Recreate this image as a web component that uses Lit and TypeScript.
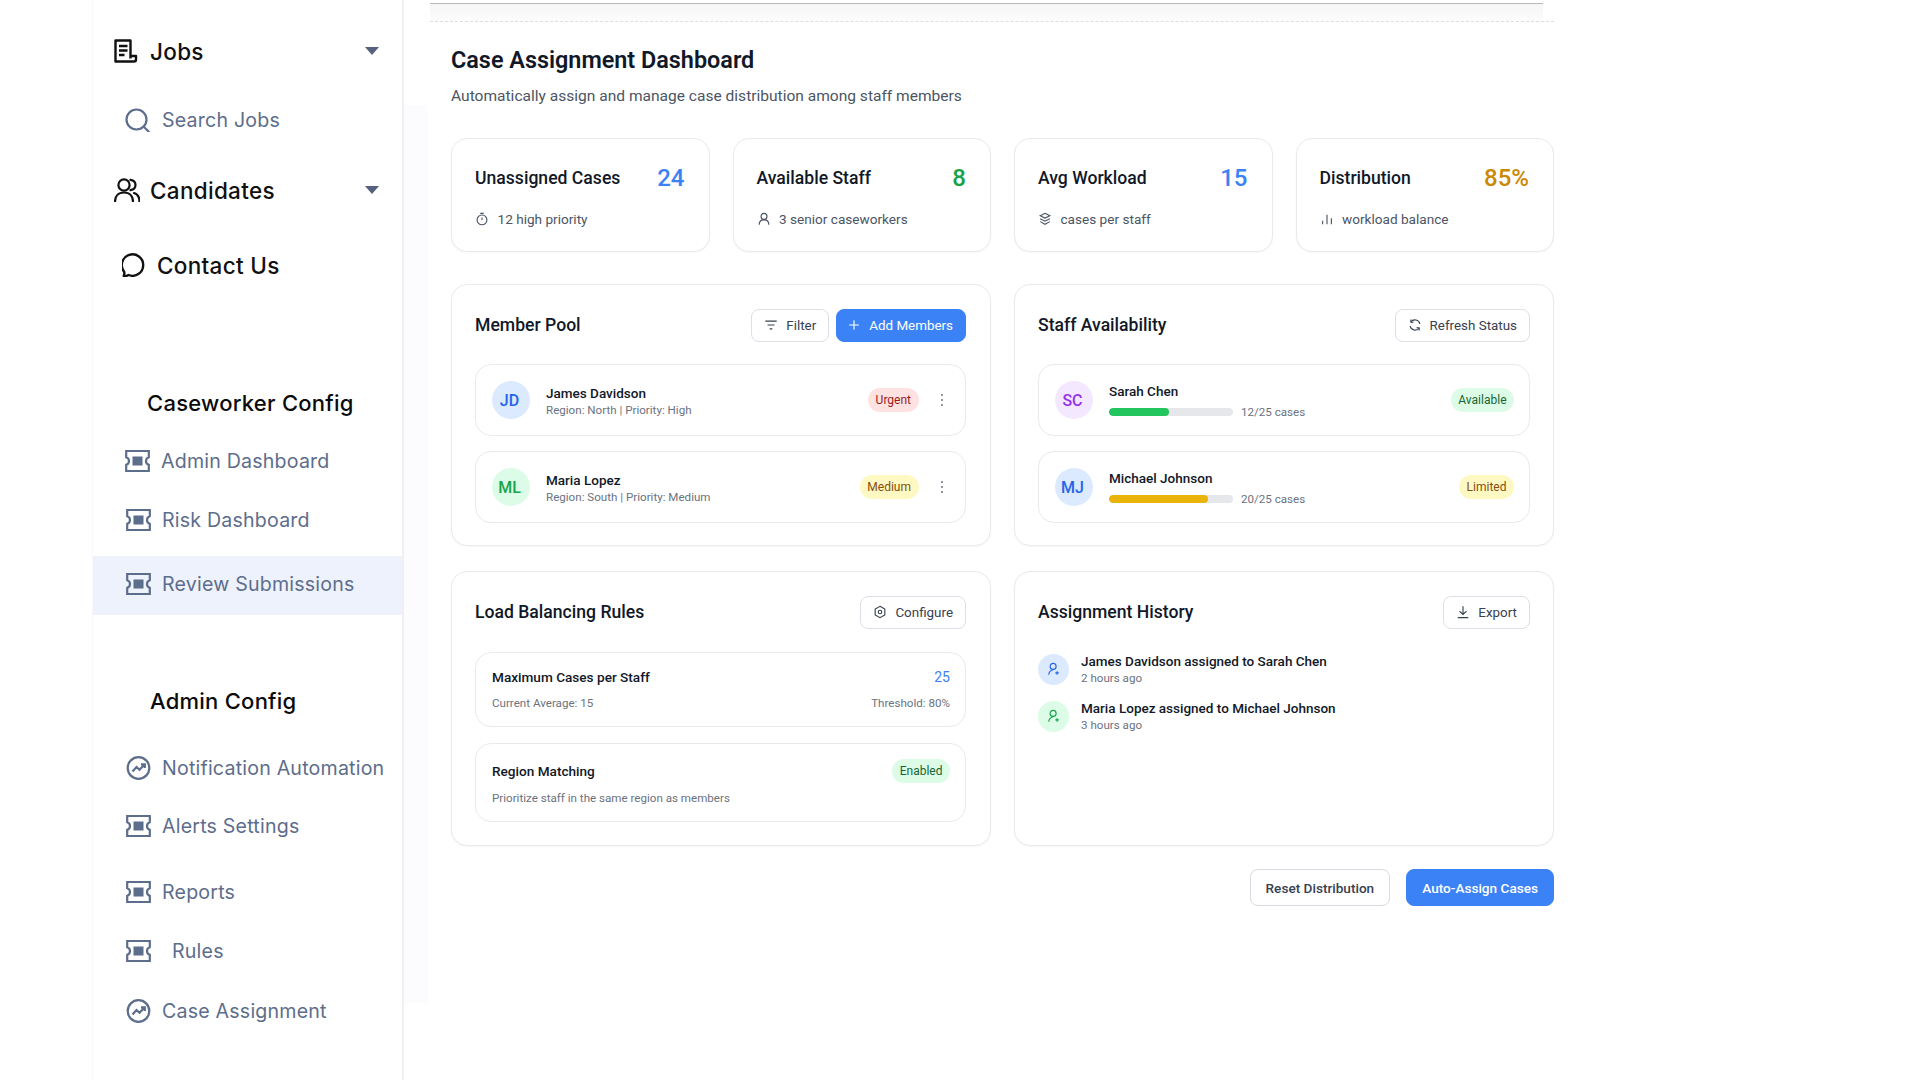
import { LitElement, html, css, svg } from "lit";
import { customElement } from "lit/decorators.js";
import { styleMap } from "lit/directives/style-map.js";

// sidebar glyphs
const ticket = svg`<path d="M1.2 2h22.6v6.2c-1.7.5-2.8 2-2.8 3.8s1.1 3.3 2.8 3.8V22H1.2v-6.2C2.900 15.300 4 13.800 4 12S2.900 8.700 1.200 8.200z" fill="none" stroke="currentColor" stroke-width="2.200"/><rect x="7.500" y="7.500" width="10" height="9" fill="currentColor"/>`;
const trend = svg`<circle cx="12.500" cy="12" r="10.800" fill="none" stroke="currentColor" stroke-width="2.200"/><path d="M6.500 15.500l4-4.500 3 2.800 5-5.300M15 8.300h3.800v3.700" fill="none" stroke="currentColor" stroke-width="2.200"/>`;
const jobs = svg`<path d="M16.500 19.500V1.500H1.500v21h18.500a2 2 0 0 0 2-2v-3.500h-5.500" fill="none" stroke="currentColor" stroke-width="2.400" stroke-linejoin="round"/><path d="M5 7h8.500M5 11.500h8.500M5 16h5.500" stroke="currentColor" stroke-width="2.400"/>`;
const search = svg`<circle cx="11.500" cy="11.500" r="10" fill="none" stroke="currentColor" stroke-width="2.200"/><path d="M18.800 18.800l5 5" stroke="currentColor" stroke-width="2.200" stroke-linecap="round"/>`;
const users = svg`<circle cx="10" cy="7" r="5.600" fill="none" stroke="currentColor" stroke-width="2.200"/><path d="M1 24c0-6 3.500-9.500 9-9.500s9 3.500 9 9.500M16.500 1.800c3 .5 5 2.700 5 5.200s-2 4.700-5 5.200M20 15c3.500 1 5.500 4.500 5.500 9" fill="none" stroke="currentColor" stroke-width="2.200" stroke-linecap="round"/>`;
const bubble = svg`<path d="M1.700 23c.6-1.200.8-3 .4-4.300A10.700 10.700 0 1 1 6.500 22c-1.500 1-3.200 1.200-4.800 1z" fill="none" stroke="currentColor" stroke-width="2.400" stroke-linejoin="round"/>`;

// small line icons for cards and buttons
const clock = svg`<circle cx="8" cy="9" r="5.600"/><path d="M8 6.200V9M6 1.500h4"/>`;
const person = svg`<circle cx="8" cy="5" r="3.400"/><path d="M2.500 14.500c0-3.500 2.300-5.500 5.500-5.500s5.500 2 5.500 5.500"/>`;
const layers = svg`<path d="M8 1.500l5.500 2.700L8 7 2.500 4.200zM2.500 7.700L8 10.500l5.500-2.800M2.500 11L8 14l5.500-3"/>`;
const bars = svg`<path d="M3 14v-4M8 14V3M13 14V7"/>`;
const filter = svg`<path d="M1.500 3.500h13M4 8h8M6.500 12.500h3"/>`;
const plus = svg`<path d="M8 2.500v11M2.500 8h11"/>`;
const refresh = svg`<path d="M13.600 6.600A5.800 5.800 0 0 0 3.300 4.600M2.400 9.400a5.800 5.800 0 0 0 10.300 2"/><path d="M3.300 1.800v3h3M12.700 14.200v-3h-3"/>`;
const hexagon = svg`<path d="M8 1.500l5.500 3.200v6.600L8 14.500l-5.500-3.200V4.700z"/><circle cx="8" cy="8" r="2"/>`;
const download = svg`<path d="M8 1.500v9M4 7l4 3.800L12 7M2 14.500h12"/>`;
const userAdd = svg`<circle cx="7" cy="5" r="3.400"/><path d="M2 14.500c.3-3.200 2.200-5.200 5-5.400M11.500 10.500v4M9.500 12.500h4"/>`;

const nav = [
  { kind: "main", icon: jobs, label: "Jobs", gap: 0, caret: true, pad: 21, space: 12, w: 24 },
  { kind: "sub", icon: search, label: "Search Jobs", gap: 29, pad: 32, space: 12, w: 25 },
  { kind: "main", icon: users, label: "Candidates", gap: 30, caret: true, pad: 21, space: 10, w: 26 },
  { kind: "main", icon: bubble, label: "Contact Us", gap: 35, pad: 29, space: 11, w: 24 },
  { kind: "head", label: "Caseworker Config", gap: 98, pad: 54 },
  { kind: "sub", icon: ticket, label: "Admin Dashboard", gap: 18, pad: 32, space: 11, w: 25 },
  { kind: "sub", icon: ticket, label: "Risk Dashboard", gap: 19, pad: 33, space: 11, w: 25 },
  { kind: "sub active", icon: ticket, label: "Review Submissions", gap: 16, pad: 33, space: 11, w: 25 },
  { kind: "head", label: "Admin Config", gap: 66, pad: 57 },
  { kind: "sub", icon: trend, label: "Notification Automation", gap: 27, pad: 33, space: 11, w: 25 },
  { kind: "sub", icon: ticket, label: "Alerts Settings", gap: 18, pad: 33, space: 11, w: 25 },
  { kind: "sub", icon: ticket, label: "Reports", gap: 26, pad: 33, space: 11, w: 25 },
  { kind: "sub", icon: ticket, label: "Rules", gap: 19, pad: 33, space: 21, w: 25 },
  { kind: "sub", icon: trend, label: "Case Assignment", gap: 20, pad: 33, space: 11, w: 25 },
];

const stats = [
  { title: "Unassigned Cases", value: "24", tone: "blue", icon: clock, note: "12 high priority" },
  { title: "Available Staff", value: "8", tone: "green", icon: person, note: "3 senior caseworkers" },
  { title: "Avg Workload", value: "15", tone: "blue", icon: layers, note: "cases per staff" },
  { title: "Distribution", value: "85%", tone: "amber", icon: bars, note: "workload balance" },
];

const members = [
  { initials: "JD", tone: "blue", name: "James Davidson", meta: "Region: North | Priority: High", tag: "Urgent", tagTone: "red" },
  { initials: "ML", tone: "green", name: "Maria Lopez", meta: "Region: South | Priority: Medium", tag: "Medium", tagTone: "yellow" },
];

const staff = [
  { initials: "SC", tone: "purple", name: "Sarah Chen", load: 12, tag: "Available", tagTone: "green", bar: "#22c55e" },
  { initials: "MJ", tone: "blue", name: "Michael Johnson", load: 20, tag: "Limited", tagTone: "yellow", bar: "#eab308" },
];

const history = [
  { tone: "blue", text: "James Davidson assigned to Sarah Chen", when: "2 hours ago" },
  { tone: "green", text: "Maria Lopez assigned to Michael Johnson", when: "3 hours ago" },
];

const line = (g: unknown) => html`<svg class="ico" viewBox="0 0 16 16">${g}</svg>`;

@customElement("app-root")
export class AppRoot extends LitElement {
  static styles = css`
    :host {
      display: block;
      width: 1920px;
      height: 1080px;
      overflow: hidden;
      background: #fff;
      font-family: Roboto, "Liberation Sans", sans-serif;
    }
    .page {
      display: flex;
      height: 1080px;
      margin-left: 92px;
    }

    /* sidebar */
    .side {
      flex: 0 0 312px;
      box-sizing: border-box;
      padding-top: 31px;
      border-left: 1px solid #f8f8fa;
      border-right: 2px solid #f0f0f3;
      font-family: Inter, "Open Sans", sans-serif;
    }
    .row {
      display: flex;
      align-items: center;
      height: 40px;
      color: #5d6d8c;
      font-size: 19.6px;
      letter-spacing: 0.2px;
      white-space: nowrap;
    }
    .row svg {
      flex: none;
      height: 24px;
    }
    .row.main {
      color: #111;
      font-size: 22.5px;
      font-weight: 500;
      letter-spacing: 0.3px;
    }
    .row.head {
      color: #0b0b0b;
      font-size: 22px;
      font-weight: 500;
      letter-spacing: 0.25px;
    }
    .row.active {
      height: 59px;
      padding-bottom: 3px;
      box-sizing: border-box;
      background: #eef2fc;
    }
    .caret {
      width: 0;
      height: 0;
      margin-left: auto;
      margin-right: 23px;
      border-left: 7px solid transparent;
      border-right: 7px solid transparent;
      border-top: 8px solid #55617e;
    }

    /* gutter + content */
    .gutter {
      flex: 0 0 24px;
      background: #fcfcfe;
      margin-top: 105px;
      height: 898px;
    }
    .wrap {
      flex: 0 0 1149px;
      margin-left: -24px;
      position: relative;
    }
    .topbar {
      height: 18px;
      margin: 3px 0 0 26px;
      border-bottom: 1px dashed #dedee2;
    }
    .shade {
      box-sizing: border-box;
      height: 18px;
      margin-right: 11px;
      border-top: 1px solid #b9b9bc;
      background: linear-gradient(#f5f5f6, #fdfdfd);
    }
    .main {
      padding: 0 0 0 47px;
    }
    h1 {
      margin: 23px 0 0;
      font-size: 23.4px;
      line-height: 30px;
      font-weight: 600;
      color: #111827;
    }
    .lead {
      margin: 9px 0 0;
      font-size: 15.55px;
      line-height: 24px;
      color: #4b5563;
    }

    .stats {
      display: grid;
      grid-template-columns: repeat(4, 258.5px);
      gap: 23px;
      margin-top: 30px;
    }
    .card {
      box-sizing: border-box;
      background: #fff;
      border: 1.500px solid #e8eaee;
      border-radius: 16px;
      box-shadow: 0 1px 2px rgba(17, 24, 39, 0.04);
    }
    .stat {
      height: 114px;
      padding: 24px 24px 0 23px;
    }
    .stat-top {
      display: flex;
      justify-content: space-between;
      align-items: center;
      height: 30px;
    }
    .stat-title {
      font-size: 17.6px;
      font-weight: 500;
      color: #111827;
    }
    .stat-value {
      font-size: 24px;
      font-weight: 500;
    }
    .blue { color: #3b82f6; }
    .green { color: #16a34a; }
    .amber { color: #ca8a04; }
    .stat-note {
      display: flex;
      align-items: center;
      gap: 8.500px;
      margin-top: 16px;
      font-size: 13.6px;
      line-height: 20px;
      color: #4b5563;
    }
    .ico {
      width: 14px;
      height: 14px;
      flex: none;
      fill: none;
      stroke: currentColor;
      stroke-width: 1.300;
    }

    .panels {
      display: grid;
      grid-template-columns: repeat(2, 540px);
      column-gap: 23px;
      row-gap: 25px;
      margin-top: 32px;
    }
    .panel {
      padding: 23px 23px 0;
    }
    .panel.left { padding-right: 24px; }
    .panel.one { height: 262px; }
    .panel.two { height: 275px; }
    .panel-head {
      display: flex;
      align-items: center;
      height: 34px;
      gap: 7px;
      margin-bottom: 23px;
    }
    .one .panel-head { margin-bottom: 22px; }
    .panel-title {
      flex: 1;
      font-size: 17.6px;
      font-weight: 500;
      color: #111827;
    }
    .btn {
      display: inline-flex;
      align-items: center;
      gap: 8px;
      box-sizing: border-box;
      height: 33px;
      padding: 0 12px;
      font: inherit;
      font-size: 13.4px;
      color: #374151;
      background: #fff;
      border: 1.500px solid #dcdfe6;
      border-radius: 8px;
    }
    .btn.primary {
      color: #fff;
      background: #3b82f6;
      border-color: #3b82f6;
    }
    .panel-head .btn.primary { padding-left: 10px; }
    .items {
      display: flex;
      flex-direction: column;
      gap: 15px;
    }
    .two .items { gap: 16px; }
    .item {
      display: flex;
      align-items: center;
      box-sizing: border-box;
      height: 72px;
      padding: 0 15px 0 16px;
      border: 1.500px solid #e8eaee;
      border-radius: 16px;
    }
    .avatar {
      flex: none;
      display: flex;
      align-items: center;
      justify-content: center;
      box-sizing: border-box;
      width: 38px;
      height: 38px;
      padding-right: 3px;
      margin-right: 16px;
      border-radius: 50%;
      font-size: 16px;
      font-weight: 500;
    }
    .avatar.blue { background: #dbeafe; color: #2563eb; }
    .avatar.green { background: #dcfce7; color: #16a34a; }
    .avatar.purple { background: #f3e8ff; color: #9333ea; }
    .who {
      flex: 1;
      min-width: 0;
      padding-top: 1px;
    }
    .name {
      font-size: 13.5px;
      line-height: 18px;
      font-weight: 500;
      color: #111827;
    }
    .meta {
      font-size: 11.6px;
      line-height: 16px;
      color: #6b7280;
    }
    .tag {
      display: inline-flex;
      align-items: center;
      height: 24px;
      padding: 0 7.500px;
      border-radius: 12px;
      font-size: 12px;
    }
    .tag.red { background: #fee2e2; color: #991b1b; }
    .tag.yellow { background: #fef9c3; color: #854d0e; }
    .tag.green { background: #dcfce7; color: #166534; }
    .dots {
      display: flex;
      flex-direction: column;
      gap: 2.500px;
      margin: 0 7px 0 22px;
    }
    .dots i {
      width: 2.500px;
      height: 2.500px;
      border-radius: 50%;
      background: #6b7280;
    }
    .load {
      display: flex;
      align-items: center;
      gap: 8px;
      margin-top: 4px;
      font-size: 11.6px;
      line-height: 16px;
      color: #6b7280;
    }
    .track {
      width: 124px;
      height: 8px;
      border-radius: 4px;
      background: #e5e7eb;
      overflow: hidden;
    }
    .fill {
      height: 100%;
      border-radius: 4px;
    }
    .rule {
      box-sizing: border-box;
      padding: 15px 15px 0 16px;
      border: 1.500px solid #e8eaee;
      border-radius: 16px;
    }
    .rule.max { height: 75px; }
    .rule.region { height: 79px; }
    .rule-row {
      display: flex;
      justify-content: space-between;
      align-items: center;
      font-size: 13.6px;
      line-height: 18px;
      font-weight: 500;
      color: #111827;
    }
    .rule-row .num {
      font-size: 14px;
      color: #3b82f6;
      font-weight: 400;
    }
    .rule-row .tag { font-weight: 400; }
    .rule-sub {
      display: flex;
      justify-content: space-between;
      margin-top: 9px;
      font-size: 11.6px;
      line-height: 16px;
      color: #6b7280;
    }
    .region .rule-sub { margin-top: 7px; }
    .region .rule-row { height: 24px; }
    .log {
      display: flex;
      flex-direction: column;
      gap: 13px;
    }
    .log-row {
      display: flex;
      align-items: center;
      height: 34px;
    }
    .log-icon {
      flex: none;
      display: flex;
      align-items: center;
      justify-content: center;
      width: 31px;
      height: 31px;
      margin-right: 12px;
      border-radius: 50%;
    }
    .log-icon.blue { background: #dbeafe; color: #2563eb; }
    .log-icon.green { background: #dcfce7; color: #16a34a; }
    .log-text {
      font-size: 13.5px;
      line-height: 18px;
      font-weight: 500;
      color: #111827;
    }
    .actions {
      display: flex;
      justify-content: flex-end;
      gap: 16px;
      margin-top: 23px;
      width: 1103px;
    }
    .actions .btn {
      height: 37px;
      padding: 0 15px;
      font-weight: 500;
      font-size: 13.6px;
      border-color: #d8dbe2;
    }
    .actions .btn.primary { border-color: #3b82f6; }
  `;

  private navRow(n: (typeof nav)[number]) {
    return html`<div
      class="row ${n.kind}"
      style=${styleMap({ marginTop: `${n.gap}px`, paddingLeft: `${n.pad}px` })}
    >
      ${n.icon
        ? html`<svg
            viewBox="0 0 ${n.w} 24"
            style=${styleMap({ width: `${n.w}px`, marginRight: `${n.space}px` })}
          >
            ${n.icon}
          </svg>`
        : ""}
      <span>${n.label}</span>
      ${n.caret ? html`<span class="caret"></span>` : ""}
    </div>`;
  }

  render() {
    return html`
      <div class="page">
        <nav class="side">${nav.map((n) => this.navRow(n))}</nav>
        <div class="gutter"></div>
        <div class="wrap">
          <div class="topbar"><div class="shade"></div></div>
          <main class="main">
            <h1>Case Assignment Dashboard</h1>
            <p class="lead">Automatically assign and manage case distribution among staff members</p>

            <section class="stats">
              ${stats.map(
                (s) => html`<div class="card stat">
                  <div class="stat-top">
                    <span class="stat-title">${s.title}</span>
                    <span class="stat-value ${s.tone}">${s.value}</span>
                  </div>
                  <div class="stat-note">${line(s.icon)}<span>${s.note}</span></div>
                </div>`
              )}
            </section>

            <section class="panels">
              <div class="card panel one left">
                <div class="panel-head">
                  <span class="panel-title">Member Pool</span>
                  <button class="btn">${line(filter)}Filter</button>
                  <button class="btn primary">${line(plus)}Add Members</button>
                </div>
                <div class="items">
                  ${members.map(
                    (m) => html`<div class="item">
                      <div class="avatar ${m.tone}">${m.initials}</div>
                      <div class="who">
                        <div class="name">${m.name}</div>
                        <div class="meta">${m.meta}</div>
                      </div>
                      <span class="tag ${m.tagTone}">${m.tag}</span>
                      <span class="dots"><i></i><i></i><i></i></span>
                    </div>`
                  )}
                </div>
              </div>

              <div class="card panel one">
                <div class="panel-head">
                  <span class="panel-title">Staff Availability</span>
                  <button class="btn">${line(refresh)}Refresh Status</button>
                </div>
                <div class="items">
                  ${staff.map(
                    (p) => html`<div class="item">
                      <div class="avatar ${p.tone}">${p.initials}</div>
                      <div class="who">
                        <div class="name">${p.name}</div>
                        <div class="load">
                          <div class="track">
                            <div
                              class="fill"
                              style=${styleMap({ width: `${(p.load / 25) * 100}%`, background: p.bar })}
                            ></div>
                          </div>
                          <span>${p.load}/25 cases</span>
                        </div>
                      </div>
                      <span class="tag ${p.tagTone}">${p.tag}</span>
                    </div>`
                  )}
                </div>
              </div>

              <div class="card panel two left">
                <div class="panel-head">
                  <span class="panel-title">Load Balancing Rules</span>
                  <button class="btn">${line(hexagon)}Configure</button>
                </div>
                <div class="items">
                  <div class="rule max">
                    <div class="rule-row"><span>Maximum Cases per Staff</span><span class="num">25</span></div>
                    <div class="rule-sub"><span>Current Average: 15</span><span>Threshold: 80%</span></div>
                  </div>
                  <div class="rule region">
                    <div class="rule-row"><span>Region Matching</span><span class="tag green">Enabled</span></div>
                    <div class="rule-sub"><span>Prioritize staff in the same region as members</span></div>
                  </div>
                </div>
              </div>

              <div class="card panel two">
                <div class="panel-head">
                  <span class="panel-title">Assignment History</span>
                  <button class="btn">${line(download)}Export</button>
                </div>
                <div class="log">
                  ${history.map(
                    (h) => html`<div class="log-row">
                      <div class="log-icon ${h.tone}">${line(userAdd)}</div>
                      <div>
                        <div class="log-text">${h.text}</div>
                        <div class="meta">${h.when}</div>
                      </div>
                    </div>`
                  )}
                </div>
              </div>
            </section>

            <div class="actions">
              <button class="btn">Reset Distribution</button>
              <button class="btn primary">Auto-Assign Cases</button>
            </div>
          </main>
        </div>
      </div>
    `;
  }
}
